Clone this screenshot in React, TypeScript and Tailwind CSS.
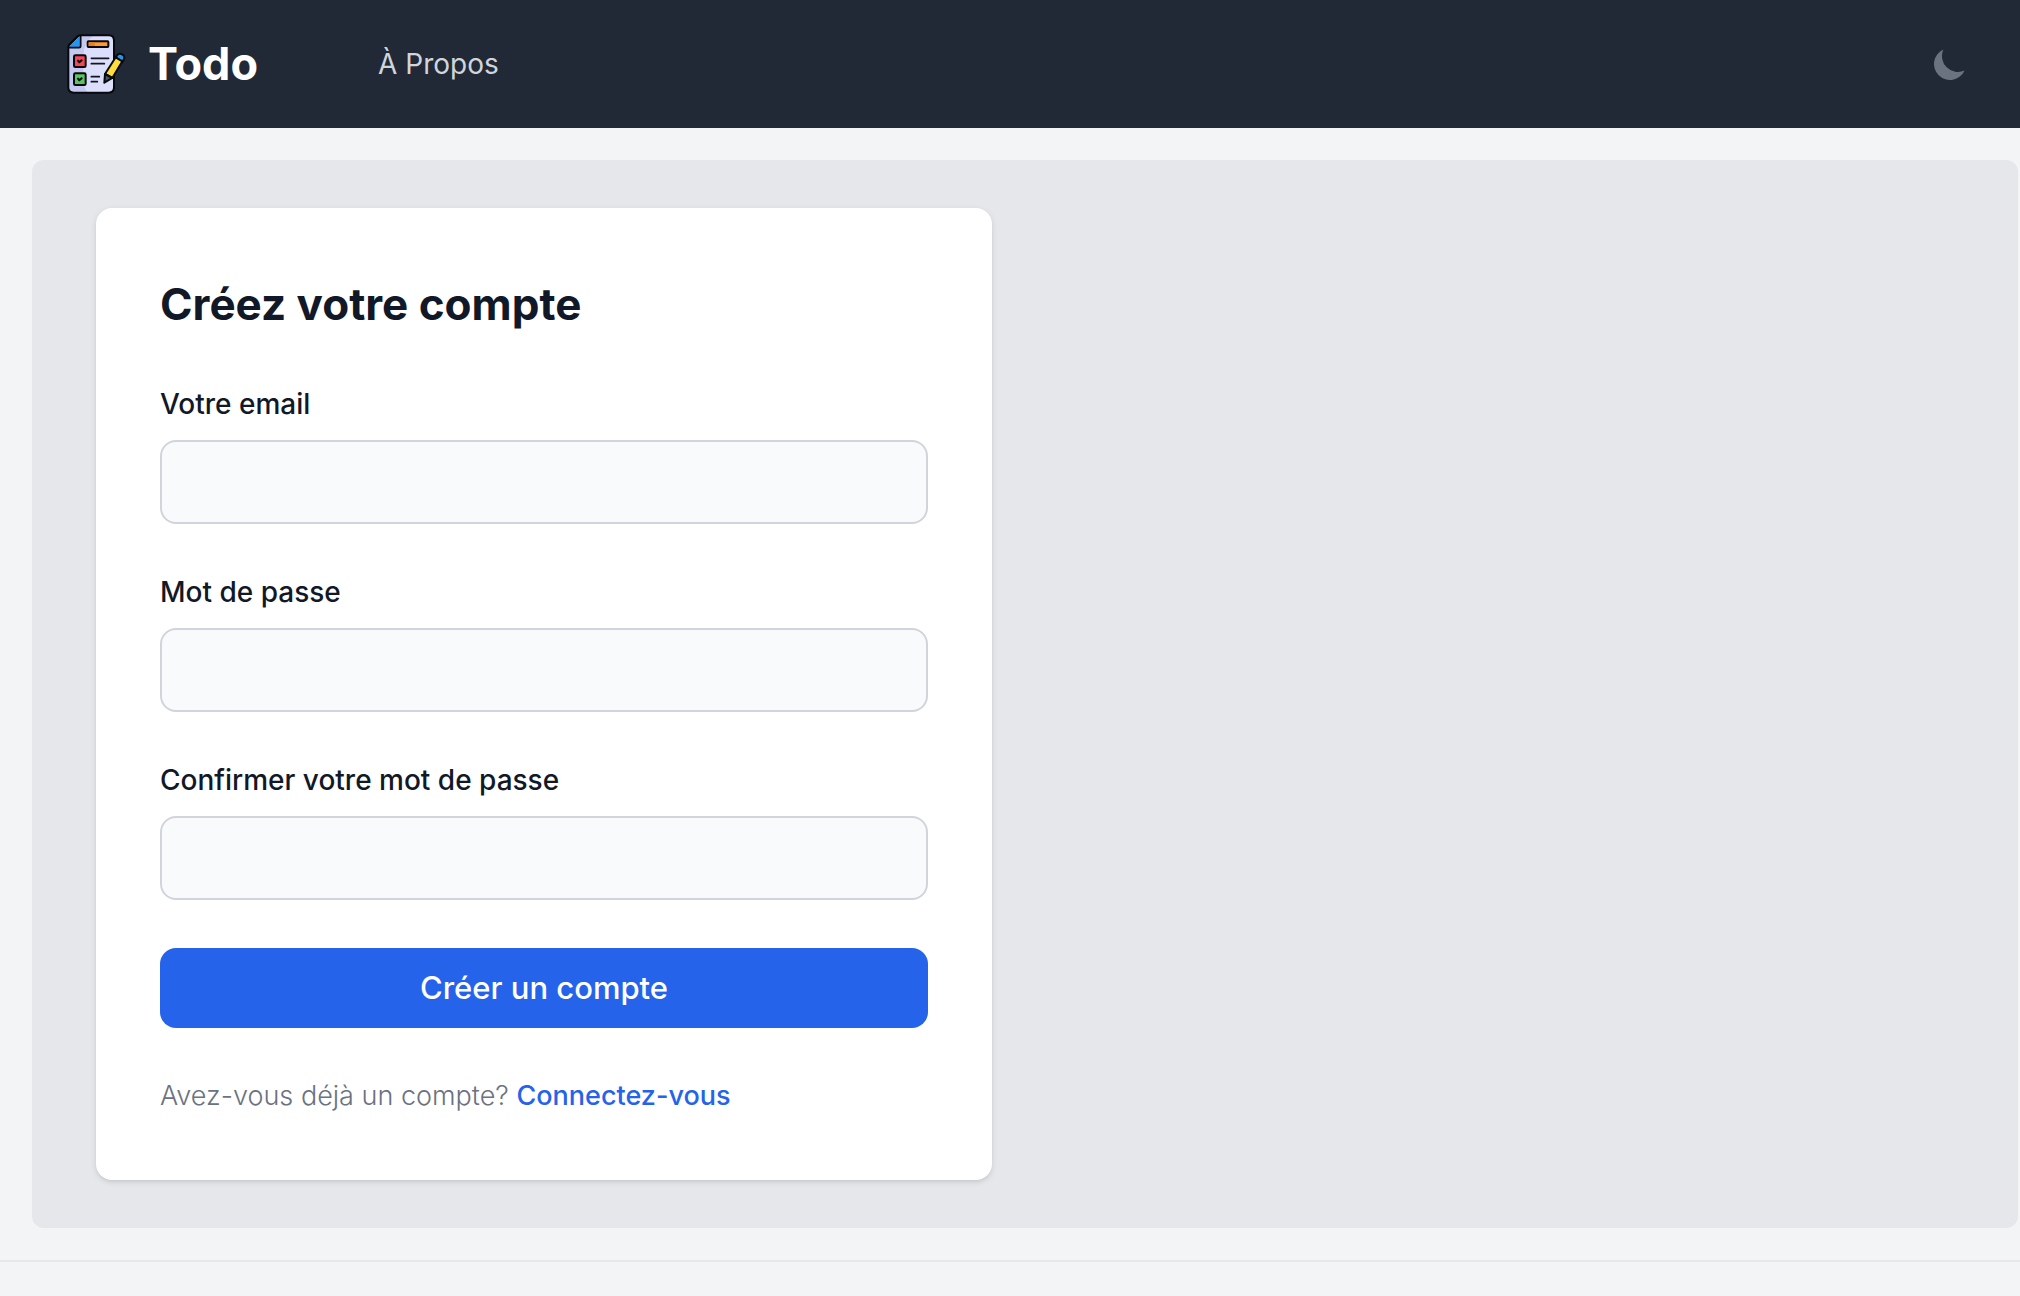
import React from "react";

function TodoLogo() {
  return (
    <svg viewBox="42 36 192 192" className="size-16 shrink-0" aria-hidden="true">
      <path d="M92 46H176Q192 46 192 62V202Q192 218 176 218H71Q55 218 55 202V84Z" fill="#dcdffb" />
      <path d="M92 46H132Q100 66 100 110V180Q100 204 114 218H71Q55 218 55 202V84Z" fill="#c5c9ef" />
      <path d="M92 46V78Q92 83 87 83H55Z" fill="#2196f3" />
      <path
        d="M92 46H176Q192 46 192 62V202Q192 218 176 218H71Q55 218 55 202V80Q55 76 58 73L83 49Q86 46 92 46Z"
        fill="none" stroke="#07090c" strokeWidth="6" />
      <path d="M92 46V78Q92 83 87 83H55" fill="none" stroke="#07090c" strokeWidth="5" />
      <rect x="113" y="64" width="62" height="17" rx="2" fill="#ff9a30" stroke="#07090c" strokeWidth="6" />
      <path d="M116 67H134V78H116Z" fill="#e8821e" />
      <rect x="72" y="106" width="35" height="35" rx="4" fill="#fb4455" stroke="#07090c" strokeWidth="6" />
      <rect x="72" y="160" width="35" height="35" rx="4" fill="#57c75e" stroke="#07090c" strokeWidth="6" />
      <g fill="none" stroke="#07090c" strokeWidth="6" strokeLinecap="round" strokeLinejoin="round">
        <path d="M84 122L88 127L95 121" />
        <path d="M84 176L88 181L95 175" />
      </g>
      <g stroke="#12141e" strokeWidth="5" strokeLinecap="round">
        <path d="M124 115H176M124 131H163M124 170H148M124 185H142" />
      </g>
      <g stroke="#07090c" strokeWidth="6" strokeLinejoin="round">
        <path d="M197 112L201 106C206 99 214 101 219 105C224 109 224 115 220 121L216 127Z" fill="#2196f3" />
        <path d="M197 112L217 124L187 174L165 162Z" fill="#ffdc3c" />
        <path d="M165 162L187 174L163 188Z" fill="#46555e" />
      </g>
    </svg>
  );
}

function MoonIcon() {
  return (
    <svg viewBox="0 0 20 20" fill="currentColor" className="size-10" aria-hidden="true">
      <path d="M17.293 13.293A8 8 0 016.707 2.707a8.001 8.001 0 1010.586 10.586z" />
    </svg>
  );
}

function Field({ id, label, type }: { id: string; label: string; type: string }) {
  return (
    <div className="flex flex-col gap-4">
      <label htmlFor={id} className="text-[28px] leading-10 font-medium text-[#111827]">
        {label}
      </label>
      <input
        id={id}
        name={id}
        type={type}
        className="h-[84px] w-full rounded-2xl border-2 border-[#d1d5db] bg-[#f9fafb] px-5 text-[28px] text-[#111827]"
      />
    </div>
  );
}

export default function App() {
  return (
    <div className="min-h-screen bg-[#f3f4f6] font-['Inter',sans-serif]">
      <header className="flex h-32 items-center justify-between bg-[#212936] pr-[50px] pl-16">
        <nav className="flex items-center">
          <a href="#" className="flex items-center gap-5 text-[45px] leading-16 font-bold text-white">
            <TodoLogo />
            <span>Todo</span>
          </a>
          <a href="#" className="ml-30 text-[28px] leading-10 text-[#d1d5db]">
            À Propos
          </a>
        </nav>
        <button type="button" aria-label="Changer de thème" className="text-[#6b7280]">
          <MoonIcon />
        </button>
      </header>

      <main className="mt-8 mr-0.5 ml-8 rounded-xl bg-[#e5e7eb] px-16 py-12">
        <section className="max-w-4xl rounded-2xl bg-white p-16 shadow-[0_2px_6px_rgba(0,0,0,0.1),0_2px_4px_-2px_rgba(0,0,0,0.1)]">
          <form className="flex flex-col gap-12">
            <h1 className="text-[44px] leading-16 font-bold text-[#111827]">Créez votre compte</h1>
            <Field id="email" label="Votre email" type="email" />
            <Field id="password" label="Mot de passe" type="password" />
            <Field id="confirm" label="Confirmer votre mot de passe" type="password" />
            <button type="button" className="h-20 w-full rounded-2xl bg-[#2563eb] text-[31px] leading-12 font-medium text-white">
              Créer un compte
            </button>
            <p className="text-[27px] leading-10 font-light text-[#6b7280]">
              Avez-vous déjà un compte?{" "}
              <a href="#" className="font-medium text-[#2563eb]">
                Connectez-vous
              </a>
            </p>
          </form>
        </section>
      </main>

      <footer className="mt-8 border-t-2 border-[#e5e7eb]" />
    </div>
  );
}
